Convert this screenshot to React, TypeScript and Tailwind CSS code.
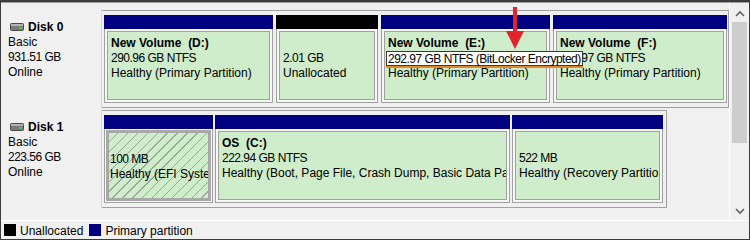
import React from "react";

type Part = {
  w: string;
  head: "navy" | "black";
  title?: string;
  size: string;
  status: string;
  hatched?: boolean;
  callout?: boolean;
};

const disk0: Part[] = [
  { w: "w-[169px]", head: "navy", title: "New Volume  (D:)", size: "290.96 GB NTFS", status: "Healthy (Primary Partition)" },
  { w: "w-[102px]", head: "black", size: "2.01 GB", status: "Unallocated" },
  { w: "w-[169px]", head: "navy", title: "New Volume  (E:)", size: "292.97 GB NTFS (BitLocker Encrypted)", status: "Healthy (Primary Partition)", callout: true },
  { w: "w-[174px]", head: "navy", title: "New Volume  (F:)", size: "292.97 GB NTFS", status: "Healthy (Primary Partition)" },
];

const disk1: Part[] = [
  { w: "w-[109px]", head: "navy", size: "100 MB", status: "Healthy (EFI System Partition)", hatched: true },
  { w: "w-[295px]", head: "navy", title: "OS  (C:)", size: "222.94 GB NTFS", status: "Healthy (Boot, Page File, Crash Dump, Basic Data Partition)" },
  { w: "w-[151px]", head: "navy", size: "522 MB", status: "Healthy (Recovery Partition)" },
];

const DiskIcon = () => (
  <svg width="14" height="8" viewBox="0 0 14 8" className="shrink-0">
    <rect x="0.5" y="0.5" width="13" height="7" rx="1" fill="#7a7a7a" stroke="#4a4a4a" />
    <rect x="1" y="1" width="12" height="2" fill="#b4b4b4" />
    <rect x="9" y="4" width="3" height="2" fill="#3fcf3f" />
  </svg>
);

const Partition = ({ p }: { p: Part }) => (
  <div className={`${p.w} shrink-0 flex flex-col h-[88px]`}>
    <div className={`h-[14px] ${p.head === "navy" ? "bg-[#000080]" : "bg-black"}`} />
    <div className={`flex-1 border-x border-b border-[#a0a0a0] bg-[#f7f7f7] ${p.hatched ? "p-[1px]" : "p-[2px]"}`}>
      <div
        className={`h-full overflow-hidden whitespace-pre pt-[4px] ${
          p.hatched
            ? "border-[3px] border-[#a8a8a8] pl-[1px] pt-[3px] bg-[repeating-linear-gradient(135deg,#cfeccb_0px,#cfeccb_6px,#9aa898_6px,#9aa898_7px)]"
            : "border border-[#a0a0a0] bg-[#cfeccb] pl-[3px]"
        }`}
      >
        <div className="font-bold h-[15px]">{p.title ?? ""}</div>
        <div className="h-[15px] tracking-[-0.5px]">{p.callout ? "" : p.size}</div>
        <div className="h-[15px]">{p.status}</div>
      </div>
    </div>
  </div>
);

const DiskRow = ({ name, size, parts, box, gap }: { name: string; size: string; parts: Part[]; box: string; gap: string }) => (
  <div className="flex h-[98px]">
    <div className="w-[101px] shrink-0 border-r border-[#d4d4d4] pl-[7px] pt-[9px]">
      <div className="flex items-center gap-[4px] font-bold pl-[2px] h-[15px]">
        <DiskIcon />
        <span className="pt-[2px]">{name}</span>
      </div>
      <div className="pt-[1px]">Basic</div>
      <div className="tracking-[-0.5px]">{size}</div>
      <div>Online</div>
    </div>
    <div className={`${box} border-t border-r border-b border-[#a0a0a0] pt-[4px] pl-[2px] flex ${gap}`}>
      {parts.map((p, i) => (
        <Partition key={i} p={p} />
      ))}
    </div>
  </div>
);

export default function App() {
  return (
    <div className="w-[750px] h-[240px] bg-[#f0f0f0] border-x border-b border-t-2 border-[#3c3c3c] flex flex-col text-[12px] leading-[15px] text-black font-['Liberation_Sans',Arial,sans-serif]">
      <div className="border-t border-[#a0a0a0]" />
      <div className="flex flex-1 min-h-0 relative">
        <div className="flex-1 pt-[7px] flex flex-col gap-[2px]">
          <DiskRow name="Disk 0" size="931.51 GB" parts={disk0} box="w-[627px]" gap="gap-[3px]" />
          <DiskRow name="Disk 1" size="223.56 GB" parts={disk1} box="w-[565px]" gap="gap-[2px]" />
        </div>
        <div className="w-[20px] shrink-0 border-l border-white flex flex-col items-center">
          <svg width="12" height="12" viewBox="0 0 12 12" className="mt-[5px]">
            <path d="M2 8 L6 4 L10 8" fill="none" stroke="#606060" strokeWidth="1.6" />
          </svg>
          <div className="w-[15px] h-[121px] bg-[#cdcdcd] mt-[2px]" />
          <div className="flex-1" />
          <svg width="12" height="12" viewBox="0 0 12 12" className="mb-[3px]">
            <path d="M2 4 L6 8 L10 4" fill="none" stroke="#606060" strokeWidth="1.6" />
          </svg>
        </div>
        <div className="absolute left-[385px] top-[48px] h-[15px] border border-[#3a3a3a] bg-white pl-[1px] pr-[1px] leading-[15px] tracking-[-0.5px] whitespace-nowrap shadow-[0_2px_0_#e08a2e]">
          292.97 GB NTFS (BitLocker Encrypted)
        </div>
        <svg width="20" height="46" viewBox="0 0 20 46" className="absolute left-[504px] top-[2px]">
          <rect x="8" y="2" width="4" height="28" fill="#e3232c" />
          <polygon points="1,26 19,26 10,44" fill="#e3232c" />
        </svg>
      </div>
      <div className="h-[19px] border-t border-white flex items-center pl-[3px] gap-[4px]">
        <div className="w-[12px] h-[12px] bg-black" />
        <span className="mr-[2px] pt-[3px]">Unallocated</span>
        <div className="w-[12px] h-[12px] bg-[#000080]" />
        <span className="pt-[3px]">Primary partition</span>
      </div>
    </div>
  );
}
